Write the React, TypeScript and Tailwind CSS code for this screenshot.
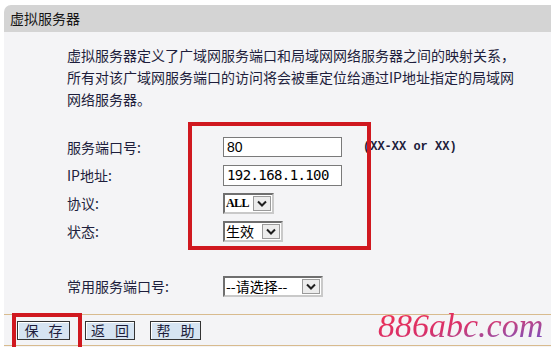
import React from "react";

const cjk = { fontFamily: '"Noto Sans CJK SC", "Noto Sans", sans-serif' };

function Chevron() {
  return (
    <svg width="10" height="7" viewBox="0 0 10 7">
      <path d="M1 1.5 L5 5.5 L9 1.5" stroke="#1e1e1e" strokeWidth="2" fill="none" />
    </svg>
  );
}

function Select({ boxClass, children }: { boxClass: string; children: React.ReactNode }) {
  return (
    <div className={"flex h-[21px] border-2 border-t-[#6f6f6f] border-l-[#6f6f6f] border-b-[#c9c9c9] border-r-[#c9c9c9] bg-white " + boxClass}>
      <div className="flex-1 flex items-center pl-[1px] text-[14px] text-black leading-none overflow-hidden whitespace-nowrap">
        {children}
      </div>
      <div className="w-[18px] my-[1px] mr-[1px] flex items-center justify-center bg-[#ececec] border border-[#9a9a9a]">
        <Chevron />
      </div>
    </div>
  );
}

function Btn({ a, b, w }: { a: string; b: string; w: string }) {
  return (
    <div className={"h-[19px] flex items-center justify-center gap-[10px] bg-[#d6e4f2] border border-[#333] shadow-[inset_1px_1px_0_#fff] text-[14px] leading-none text-[#1c1c3a] " + w}>
      <span>{a}</span>
      <span>{b}</span>
    </div>
  );
}

export default function App() {
  const rowLabel = "w-[156px] text-[14px] leading-none text-[#1e1e3c]";
  return (
    <div className="w-[551px] h-[347px] bg-white relative overflow-hidden pt-[5px] pl-[4px] flex flex-col" style={cjk}>
      <div className="h-[27px] bg-[#d4d4d4] rounded-tl-[7px] flex items-center pl-[6px] text-[14px] text-[#151515]">
        虚拟服务器
      </div>
      <div className="flex-1 bg-[#f4f4f6] flex flex-col">
        <div className="pt-[12px] pl-[63px] text-[14px] leading-[22px] text-[#1e1e3c] whitespace-nowrap">
          <div>虚拟服务器定义了广域网服务端口和局域网网络服务器之间的映射关系，</div>
          <div>所有对该广域网服务端口的访问将会被重定位给通过IP地址指定的局域网</div>
          <div>网络服务器。</div>
        </div>

        <div className="mt-[23px] pl-[63px] flex flex-col">
          <div className="h-[28px] flex items-center">
            <div className={rowLabel}>服务端口号:</div>
            <div className="w-[119px] h-[20px] bg-white border border-[#7a7a7a] flex items-center pl-[3px] text-[14px] text-black leading-none" style={{ fontFamily: '"Liberation Sans", sans-serif' }}>
              80
            </div>
            <div className="ml-[21px] text-[12px] font-bold text-[#20203a]" style={{ fontFamily: '"Liberation Mono", monospace' }}>
              (XX-XX or XX)
            </div>
          </div>
          <div className="h-[28px] flex items-center">
            <div className={rowLabel}>IP地址:</div>
            <div className="w-[119px] h-[21px] bg-white border border-[#7a7a7a] flex items-center pl-[3px] text-[14px] text-black leading-none tracking-[-0.6px]" style={{ fontFamily: '"DejaVu Sans Mono", monospace' }}>
              192.168.1.100
            </div>
          </div>
          <div className="h-[28px] flex items-center">
            <div className={rowLabel}>协议:</div>
            <Select boxClass="w-[51px]">
              <span className="font-bold text-[12px] tracking-[-0.6px]" style={{ fontFamily: '"Liberation Serif", serif' }}>ALL</span>
            </Select>
          </div>
          <div className="h-[28px] flex items-center">
            <div className={rowLabel}>状态:</div>
            <Select boxClass="w-[60px]">
              <span>生效</span>
            </Select>
          </div>
        </div>

        <div className="mt-[27px] pl-[63px] h-[28px] flex items-center">
          <div className={rowLabel}>常用服务端口号:</div>
          <Select boxClass="w-[100px]">
            <span>--请选择--</span>
          </Select>
        </div>

        <div className="mt-[14px] h-px bg-[#d8bb8e]" />
        <div className="h-[30px] flex items-center pl-[13px] gap-[15px]">
          <Btn a="保" b="存" w="w-[53px]" />
          <Btn a="返" b="回" w="w-[50px]" />
          <Btn a="帮" b="助" w="w-[51px]" />
        </div>
        <div className="h-px bg-[#d8bb8e]" />
      </div>

      <div className="absolute left-[188px] top-[122px] w-[183px] h-[128px] border-4 border-[#d0181f]" />
      <div className="absolute left-[12px] top-[313px] w-[70px] h-[44px] border-4 border-[#d0181f]" />
      <div
        className="absolute left-[378px] top-[309px] text-[34px] leading-none italic bg-linear-to-br from-[#f2304c] via-[#d8306a] to-[#6f48c8] bg-clip-text text-transparent"
        style={{ fontFamily: '"Liberation Serif", serif' }}
      >
        886abc.com
      </div>
    </div>
  );
}
